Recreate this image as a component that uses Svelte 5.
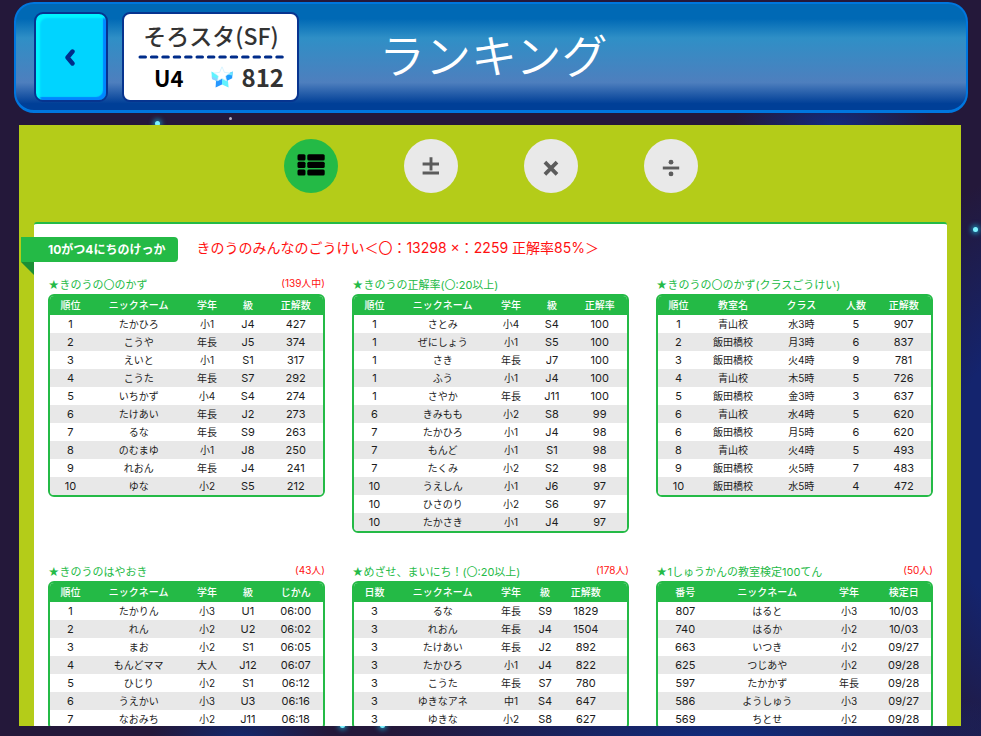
<script>
  const boards = [
    {
      title: '★きのうの〇のかず',
      count: '(139人中)',
      cols: [15, 35, 15, 15, 20],
      head: ['順位', 'ニックネーム', '学年', '級', '正解数'],
      rows: [
        ['1', 'たかひろ', '小1', 'J4', '427'],
        ['2', 'こうや', '年長', 'J5', '374'],
        ['3', 'えいと', '小1', 'S1', '317'],
        ['4', 'こうた', '年長', 'S7', '292'],
        ['5', 'いちかず', '小4', 'S4', '274'],
        ['6', 'たけあい', '年長', 'J2', '273'],
        ['7', 'るな', '年長', 'S9', '263'],
        ['8', 'のむまゆ', '小1', 'J8', '250'],
        ['9', 'れおん', '年長', 'J4', '241'],
        ['10', 'ゆな', '小2', 'S5', '212'],
      ],
    },
    {
      title: '★きのうの正解率(〇:20以上)',
      count: '',
      cols: [15, 35, 15, 15, 20],
      head: ['順位', 'ニックネーム', '学年', '級', '正解率'],
      rows: [
        ['1', 'さとみ', '小4', 'S4', '100'],
        ['1', 'ぜにしょう', '小1', 'S5', '100'],
        ['1', 'さき', '年長', 'J7', '100'],
        ['1', 'ふう', '小1', 'J4', '100'],
        ['1', 'さやか', '年長', 'J11', '100'],
        ['6', 'きみもも', '小2', 'S8', '99'],
        ['7', 'たかひろ', '小1', 'J4', '98'],
        ['7', 'もんど', '小1', 'S1', '98'],
        ['7', 'たくみ', '小2', 'S2', '98'],
        ['10', 'うえしん', '小1', 'J6', '97'],
        ['10', 'ひさのり', '小2', 'S6', '97'],
        ['10', 'たかさき', '小1', 'J4', '97'],
      ],
    },
    {
      title: '★きのうの〇のかず(クラスごうけい)',
      count: '',
      cols: [15, 25, 25, 15, 20],
      head: ['順位', '教室名', 'クラス', '人数', '正解数'],
      rows: [
        ['1', '青山校', '水3時', '5', '907'],
        ['2', '飯田橋校', '月3時', '6', '837'],
        ['3', '飯田橋校', '火4時', '9', '781'],
        ['4', '青山校', '木5時', '5', '726'],
        ['5', '飯田橋校', '金3時', '3', '637'],
        ['6', '青山校', '水4時', '5', '620'],
        ['6', '飯田橋校', '月5時', '6', '620'],
        ['8', '青山校', '火4時', '5', '493'],
        ['9', '飯田橋校', '火5時', '7', '483'],
        ['10', '飯田橋校', '水5時', '4', '472'],
      ],
    },
    {
      title: '★きのうのはやおき',
      count: '(43人)',
      cols: [15, 35, 15, 15, 20],
      head: ['順位', 'ニックネーム', '学年', '級', 'じかん'],
      rows: [
        ['1', 'たかりん', '小3', 'U1', '06:00'],
        ['2', 'れん', '小2', 'U2', '06:02'],
        ['3', 'まお', '小2', 'S1', '06:05'],
        ['4', 'もんどママ', '大人', 'J12', '06:07'],
        ['5', 'ひじり', '小2', 'S1', '06:12'],
        ['6', 'うえかい', '小3', 'U3', '06:16'],
        ['7', 'なおみち', '小2', 'J11', '06:18'],
      ],
    },
    {
      title: '★めざせ、まいにち！(〇:20以上)',
      count: '(178人)',
      cols: [15, 35, 15, 10, 25],
      inset: true,
      head: ['日数', 'ニックネーム', '学年', '級', '正解数'],
      rows: [
        ['3', 'るな', '年長', 'S9', '1829'],
        ['3', 'れおん', '年長', 'J4', '1504'],
        ['3', 'たけあい', '年長', 'J2', '892'],
        ['3', 'たかひろ', '小1', 'J4', '822'],
        ['3', 'こうた', '年長', 'S7', '780'],
        ['3', 'ゆきなアネ', '中1', 'S4', '647'],
        ['3', 'ゆきな', '小2', 'S8', '627'],
      ],
    },
    {
      title: '★1しゅうかんの教室検定100てん',
      count: '(50人)',
      cols: [20, 40, 20, 20],
      head: ['番号', 'ニックネーム', '学年', '検定日'],
      rows: [
        ['807', 'はると', '小3', '10/03'],
        ['740', 'はるか', '小2', '10/03'],
        ['663', 'いつき', '小2', '09/27'],
        ['625', 'つじあや', '小2', '09/28'],
        ['597', 'たかかず', '年長', '09/28'],
        ['586', 'ようしゅう', '小3', '09/27'],
        ['569', 'ちとせ', '小2', '09/28'],
      ],
    },
  ];

  const modes = [
    { id: 'all', label: 'いちらん' },
    { id: 'plus', label: 'たしざん・ひきざん' },
    { id: 'times', label: 'かけざん' },
    { id: 'divide', label: 'わりざん' },
  ];

  let mode = $state('all');
  const isNumeric = (s) => /^[\x20-\x7e]+$/.test(s);
</script>

<div class="screen">
  <i class="spark s1"></i>
  <i class="spark s2"></i>
  <i class="spark s3"></i>
  <i class="spark s4"></i>
  <i class="spark s5"></i>

  <header>
    <button class="back" aria-label="もどる">
      <svg width="12" height="20" viewBox="0 0 12 20">
        <path d="M7.500 4.500L2.500 10.500L7.500 16.500" fill="none" stroke="#002c8a" stroke-width="4.4" stroke-linecap="round" stroke-linejoin="round" />
      </svg>
    </button>
    <div class="profile">
      <div class="name">そろスタ(SF)</div>
      <svg class="rule" width="100%" height="4">
        <line x1="2" y1="2" x2="145" y2="2" stroke="#002c8a" stroke-width="3" stroke-linecap="round" stroke-dasharray="5.5 5.9" />
      </svg>
      <div class="stats">
        <span class="grade">U4</span>
        <svg width="22" height="22" viewBox="0 0 22 22">
          <path d="M.4 5.600L8 9.400L6.400 15.200L1 13Z" fill="#5ef3ff" />
          <path d="M.8 10.500L6.900 13L6.200 15.200L1 13Z" fill="#8cd0ff" />
          <path d="M21.600 5.600L14 9.400L15.800 15L21.200 12.200Z" fill="#1f9bff" />
          <path d="M21.600 5.600L16 8.400L21.400 9.500Z" fill="#6be6ff" />
          <path d="M5 15.200L11 12.200V18.400L4.600 21.600Z" fill="#2698ff" />
          <path d="M11 12.200L17 15.200L17.600 21.600L11 18.400Z" fill="#62f1ff" />
          <path d="M11 .8L13.400 6.400L18.800 7L14.600 10L15.400 14.800L11 12.400L6.600 14.800L7.400 10L3.200 7L8.600 6.400Z" fill="#fff" stroke="#c9efff" stroke-width=".7" />
        </svg>
        <span class="points">812</span>
      </div>
    </div>
    <h1>ランキング</h1>
  </header>

  <main>
    <nav>
      {#each modes as m}
        <button class="mode" class:active={mode === m.id} aria-label={m.label} aria-pressed={mode === m.id} onclick={() => (mode = m.id)}>
          <svg width="54" height="54" viewBox="0 0 54 54">
            {#if m.id === 'all'}
              {#each [15.2, 22.8, 30.4] as y}
                <rect x="13.500" {y} width="8" height="6.200" rx="1.500" />
                <rect x="23.300" {y} width="17.400" height="6.200" rx="1.500" />
              {/each}
            {:else if m.id === 'plus'}
              <path d="M18.600 25H35M27 18.200V31.500M18.600 34H35" stroke="currentColor" stroke-width="2.900" />
            {:else if m.id === 'times'}
              <path d="M20.900 23.200L33 35.300M33 23.200L20.900 35.300" stroke="currentColor" stroke-width="3.800" />
            {:else}
              <path d="M18.800 29H35.200" stroke="currentColor" stroke-width="2.900" />
              <circle cx="27" cy="23.200" r="2.400" fill="currentColor" />
              <circle cx="27" cy="34.900" r="2.400" fill="currentColor" />
            {/if}
          </svg>
        </button>
      {/each}
    </nav>

    <section class="sheet">
      <div class="summary">
        <h2 class="ribbon">10がつ4にちのけっか</h2>
        <p>きのうのみんなのごうけい＜〇：13298 ×：2259 正解率85%＞</p>
      </div>
      <div class="boards">
        {#each boards as b}
          <article>
            <div class="caption">
              <h3>{b.title}</h3>
              <span class="count">{b.count}</span>
            </div>
            <table class:inset={b.inset} aria-label={b.title}>
              <colgroup>
                {#each b.cols as w}
                  <col style="width: {w}%" />
                {/each}
              </colgroup>
              <thead>
                <tr>
                  {#each b.head as h}<th scope="col">{h}</th>{/each}
                </tr>
              </thead>
              <tbody>
                {#each b.rows as row}
                  <tr>
                    {#each row as cell}<td class:num={isNumeric(cell)}>{cell}</td>{/each}
                  </tr>
                {/each}
              </tbody>
            </table>
          </article>
        {/each}
      </div>
    </section>
  </main>
</div>

<style>
  :global(body) {
    margin: 0;
    background: #24183a;
  }

  * {
    box-sizing: border-box;
  }

  h1, h2, h3, p {
    margin: 0;
    font-weight: 400;
  }

  button {
    padding: 0;
    cursor: pointer;
  }

  .screen {
    position: relative;
    display: flex;
    flex-direction: column;
    gap: 12px;
    height: 100vh;
    padding: 2px 13px 10px 14px;
    overflow: hidden;
    font-family: Inter, "Noto Sans CJK JP", sans-serif;
    background:
      radial-gradient(ellipse 100px 40px at 833px 125px, #102c80, transparent),
      radial-gradient(ellipse 90px 40px at 240px 740px, #12286e, transparent),
      radial-gradient(ellipse 330px 60px at 720px 740px, #0f2c80, transparent),
      radial-gradient(ellipse 120px 300px at 1000px 480px, #14246e 40%, transparent),
      #24183a;
  }

  .spark {
    position: absolute;
    width: 5px;
    height: 5px;
    border-radius: 50%;
    background: #7df3ff;
    box-shadow: 0 0 5px 2px #1c7fa6;
  }

  .s1 { left: 155px; top: 121px; }
  .s2 { left: 229px; top: 117px; width: 3px; height: 3px; background: #b9b3c4; box-shadow: none; }
  .s3 { left: 973px; top: 227px; }
  .s4 { left: 340px; top: 723px; }
  .s5 { left: 380px; top: 723px; }

  header {
    position: relative;
    flex: none;
    display: flex;
    gap: 14px;
    padding: 8px 18px;
    border: 2px solid #0076de;
    border-bottom-width: 3px;
    border-radius: 20px;
    background: linear-gradient(#0069b5 0, #0069b5 14%, #2f8fc6 32%, #4e7fbe 74%, #003f97 94%, #003f97);
  }

  .back {
    display: flex;
    align-items: center;
    justify-content: center;
    width: 74px;
    height: 90px;
    border: 2px solid #07348f;
    border-radius: 9px;
    background: #00d4ff;
    box-shadow: inset 4px 4px 2px #00f4ff, inset -3px -3px 1px #0086ff;
  }

  .profile {
    width: 177px;
    height: 90px;
    padding: 4px 13px 0 14px;
    border: 2px solid #07348f;
    border-radius: 8px;
    background: #fff;
    color: #333;
    font-family: "Noto Sans CJK JP", sans-serif;
    font-weight: 500;
  }

  .name {
    padding-bottom: 2px;
    font-size: 23px;
    line-height: 35px;
    text-align: center;
    white-space: nowrap;
  }

  .rule {
    display: block;
  }

  .stats {
    display: flex;
    align-items: center;
    justify-content: flex-end;
    gap: 9px;
    line-height: 36px;
    font-size: 24px;
    font-weight: 700;
  }

  .grade {
    margin-right: 18px;
    color: #000;
    font-size: 22px;
  }

  h1 {
    padding: 8px 0 0 66px;
    color: #fff;
    font-family: "Noto Sans CJK JP", sans-serif;
    font-size: 46px;
    font-weight: 350;
    line-height: 66px;
  }

  main {
    position: relative;
    flex: 1;
    min-height: 0;
    margin: 0 7px 0 5px;
    padding: 14px 14px 0 15px;
    overflow: hidden;
    background: #b4cc19;
  }

  nav {
    display: flex;
    justify-content: center;
    gap: 66px;
    padding-bottom: 29px;
  }

  .mode {
    width: 54px;
    height: 54px;
    border: 0;
    border-radius: 50%;
    background: #e9e9e9;
    color: #5c5c5c;
  }

  .mode svg {
    display: block;
  }

  .mode.active {
    background: #24ba46;
    color: #000;
  }

  .sheet {
    padding: 13px 14px 30px;
    border-top: 2px solid #24ba46;
    border-radius: 3px;
    background: #fff;
  }

  .summary {
    display: flex;
    gap: 18px;
    margin-left: -27px;
    line-height: 25px;
  }

  .ribbon {
    position: relative;
    padding: 0 13px 0 27px;
    margin-left: 0;
    border-radius: 0 4px 4px 0;
    background: #24ba46;
    color: #fff;
    font-size: 12px;
    font-weight: 700;
  }

  .ribbon::after {
    content: "";
    position: absolute;
    left: 0;
    top: 100%;
    border-top: 13px solid #1b8f35;
    border-left: 13px solid transparent;
  }

  .summary p {
    color: #ff1010;
    font-size: 14px;
    line-height: 22px;
  }

  .boards {
    display: grid;
    grid-template-columns: repeat(3, minmax(0, 1fr));
    gap: 30px 27px;
    padding-top: 14px;
  }

  .caption {
    display: flex;
    justify-content: space-between;
    font-size: 10px;
    line-height: 18px;
  }

  h3 {
    color: #24ba46;
    font-size: 11px;
  }

  .count {
    color: #ff1010;
    line-height: 15px;
  }

  table {
    width: 100%;
    table-layout: fixed;
    border: 2px solid #24ba46;
    border-radius: 6px;
    border-spacing: 0;
    overflow: hidden;
    color: #1c1c1c;
    font-size: 10px;
    line-height: 18px;
    text-align: center;
  }

  th {
    height: 19px;
    padding: 0 0 1px;
    background: #24ba46;
    color: #fff;
    font-weight: 500;
  }

  td {
    height: 18px;
    padding: 0;
    white-space: nowrap;
  }

  .num {
    font-size: 11px;
  }

  tbody tr:nth-child(even) {
    background: #e8e8e8;
  }

  .inset th:last-child,
  .inset td:last-child {
    padding-right: 14px;
  }
</style>
